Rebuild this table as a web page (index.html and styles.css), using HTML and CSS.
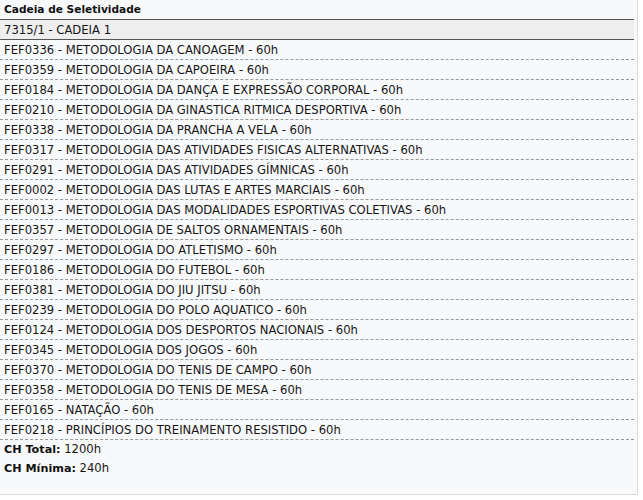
FILE: index.html
```html
<!DOCTYPE html>
<html lang="pt-BR">
<head>
<meta charset="utf-8">
<title>Cadeia de Seletividade</title>
<link rel="stylesheet" href="styles.css">
</head>
<body>
<div class="panel">
  <div class="panel-title">Cadeia de Seletividade</div>
  <div class="group-head">7315/1 - CADEIA 1</div>
  <ul class="list">
    <li>FEF0336 - METODOLOGIA DA CANOAGEM - 60h</li>
    <li>FEF0359 - METODOLOGIA DA CAPOEIRA - 60h</li>
    <li>FEF0184 - METODOLOGIA DA DANÇA E EXPRESSÃO CORPORAL - 60h</li>
    <li>FEF0210 - METODOLOGIA DA GINASTICA RITMICA DESPORTIVA - 60h</li>
    <li>FEF0338 - METODOLOGIA DA PRANCHA A VELA - 60h</li>
    <li>FEF0317 - METODOLOGIA DAS ATIVIDADES FISICAS ALTERNATIVAS - 60h</li>
    <li>FEF0291 - METODOLOGIA DAS ATIVIDADES GÍMNICAS - 60h</li>
    <li>FEF0002 - METODOLOGIA DAS LUTAS E ARTES MARCIAIS - 60h</li>
    <li>FEF0013 - METODOLOGIA DAS MODALIDADES ESPORTIVAS COLETIVAS - 60h</li>
    <li>FEF0357 - METODOLOGIA DE SALTOS ORNAMENTAIS - 60h</li>
    <li>FEF0297 - METODOLOGIA DO ATLETISMO - 60h</li>
    <li>FEF0186 - METODOLOGIA DO FUTEBOL - 60h</li>
    <li>FEF0381 - METODOLOGIA DO JIU JITSU - 60h</li>
    <li>FEF0239 - METODOLOGIA DO POLO AQUATICO - 60h</li>
    <li>FEF0124 - METODOLOGIA DOS DESPORTOS NACIONAIS - 60h</li>
    <li>FEF0345 - METODOLOGIA DOS JOGOS - 60h</li>
    <li>FEF0370 - METODOLOGIA DO TENIS DE CAMPO - 60h</li>
    <li>FEF0358 - METODOLOGIA DO TENIS DE MESA - 60h</li>
    <li>FEF0165 - NATAÇÃO - 60h</li>
    <li>FEF0218 - PRINCÍPIOS DO TREINAMENTO RESISTIDO - 60h</li>
  </ul>
  <div class="totals">
    <div class="total-line"><b class="total-label">CH Total:</b> 1200h</div>
    <div class="total-line"><b class="total-label">CH Mínima:</b> 240h</div>
  </div>
</div>
</body>
</html>
```

FILE: styles.css
```css
html, body {
  margin: 0;
  padding: 0;
  background: #ffffff;
}

body {
  font-family: "DejaVu Sans", Verdana, sans-serif;
  font-size: 11.6px;
  color: #151515;
}

.panel {
  width: 638px;
  height: 495px;
  box-sizing: border-box;
  background: #f8f9fb;
  border-right: 1px solid #dcdcdc;
  border-bottom: 1px solid #dcdcdc;
  padding: 0 3px 0 0;
}

.panel-title {
  height: 19px;
  line-height: 19px;
  padding-left: 4px;
  font-weight: bold;
  font-size: 10.6px;
  color: #111;
}

.group-head {
  height: 18px;
  padding-top: 1px;
  line-height: 18px;
  padding-left: 4px;
  background: #eeeeee;
  border-top: 1px solid #555;
  border-bottom: 1px solid #555;
}

.list {
  list-style: none;
  margin: 0;
  padding: 0;
}

.list li {
  height: 17px;
  padding-top: 2px;
  line-height: 17px;
  padding-left: 4px;
  border-bottom: 1px dashed #999;
}

.totals {
  padding-left: 4px;
}

.total-line {
  height: 19px;
  line-height: 19px;
}

.total-label {
  font-size: 11.2px;
  color: #111;
}
```
